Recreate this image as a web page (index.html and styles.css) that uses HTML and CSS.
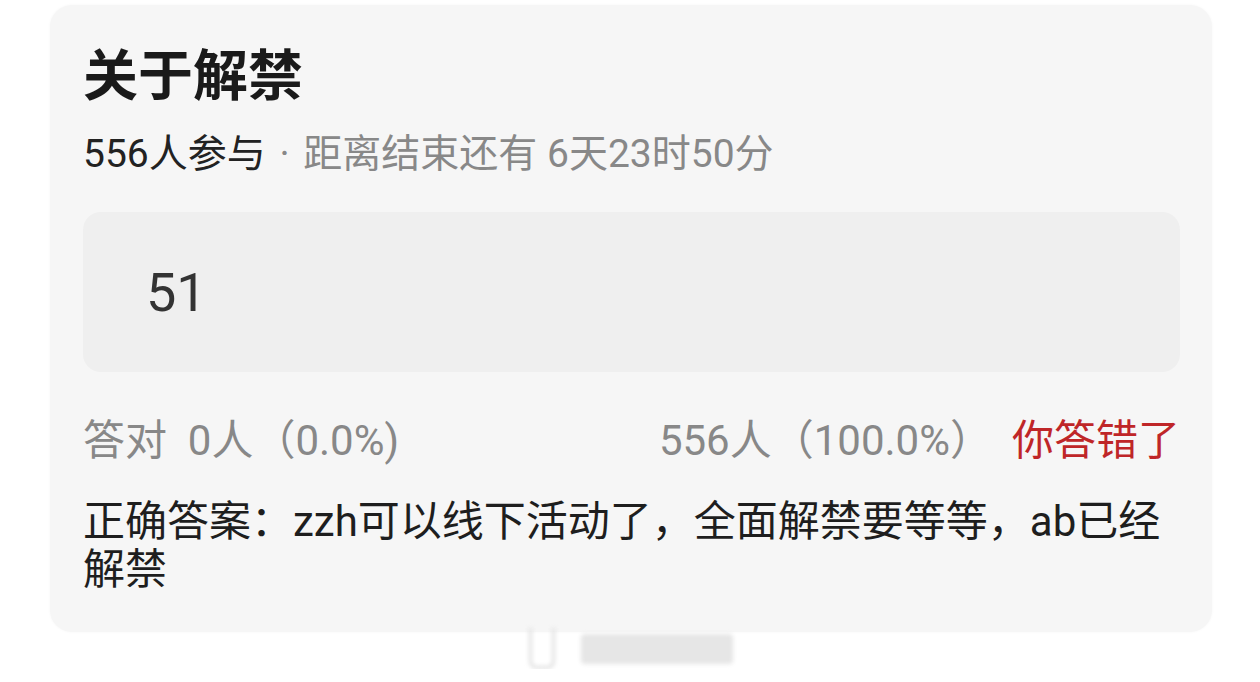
FILE: index.html
```html
<!DOCTYPE html>
<html>
<head>
    <meta charset="utf-8">
    <link rel="stylesheet" href="styles.css">
    <title>关于解禁</title>
</head>
<body>
    <div class="card">
        <h1 class="title">关于解禁</h1>
        <div class="meta">
            <span class="count">556人参与</span>
            <span class="dot">·</span>
            <span class="remain">距离结束还有 6天23时50分</span>
        </div>
        <div class="answer-box">51</div>
        <div class="stats">
            <div class="stat-left">答对&nbsp;&nbsp;0人（0.0%)</div>
            <div class="stat-right">
                <span class="stat-wrong">556人（100.0%）</span>
                <span class="verdict">你答错了</span>
            </div>
        </div>
        <div class="correct">正确答案：zzh可以线下活动了，全面解禁要等等，ab已经解禁</div>
    </div>
    <div class="watermark">
        <div class="wm-cup"></div>
        <div class="wm-bar"></div>
    </div>
</body>
</html>
```

FILE: styles.css
```css
body {
    margin: 0;
    background-color: #ffffff;
    font-family: Roboto, "Noto Sans CJK SC", sans-serif;
}
.card {
    margin: 5px 48px 0 50px;
    height: 627px;
    box-sizing: border-box;
    background-color: #f6f6f6;
    border-radius: 22px;
    padding: 36px 32px 0 33px;
    box-shadow: 0 0 3px rgba(0, 0, 0, 0.04);
}
.title {
    margin: 0;
    font-size: 55px;
    line-height: 70px;
    font-weight: bold;
    color: #1a1a1a;
}
.meta {
    margin-top: 20px;
    font-size: 39px;
    line-height: 46px;
    color: #888888;
}
.count {
    color: #222222;
}
.dot {
    margin: 0 4px;
}
.answer-box {
    margin-top: 35px;
    height: 160px;
    background-color: #efefef;
    border-radius: 18px;
    padding-left: 63px;
    display: flex;
    align-items: center;
    font-size: 54px;
    color: #333333;
}
.stats {
    margin-top: 42px;
    display: flex;
    justify-content: space-between;
    font-size: 42px;
    line-height: 54px;
    color: #888888;
}
.stat-right {
    display: flex;
    gap: 20px;
}
.verdict {
    color: #bf2628;
}
.correct {
    margin-top: 30px;
    font-size: 42px;
    line-height: 48px;
    color: #1e1e1e;
}
.watermark {
    display: flex;
    align-items: center;
    gap: 26px;
    margin-left: 529px;
    margin-top: -4px;
    filter: blur(2px);
}
.wm-cup {
    width: 20px;
    height: 38px;
    border: 3px solid #e0e0e0;
    border-top: none;
    border-radius: 0 0 8px 8px;
}
.wm-bar {
    width: 152px;
    height: 30px;
    background-color: #e6e6e6;
    border-radius: 4px;
}
```
